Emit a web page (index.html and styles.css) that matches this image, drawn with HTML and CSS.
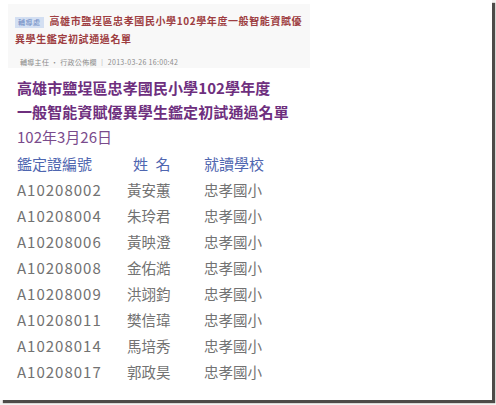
FILE: index.html
```html
<!DOCTYPE html>
<html lang="zh-Hant">
<head>
<meta charset="utf-8">
<link rel="stylesheet" href="styles.css">
</head>
<body>
<div class="page">
  <div class="summary">
    <div class="summary-title"><span class="badge">輔導處</span><span class="headline">高雄市鹽埕區忠孝國民小學102學年度一般智能資賦優異學生鑑定初試通過名單</span></div>
    <div class="meta">輔導主任 ‧ 行政公佈欄 ｜ 2013-03-26 16:00:42</div>
  </div>
  <div class="content">
    <h1 class="title">高雄市鹽埕區忠孝國民小學102學年度<br>一般智能資賦優異學生鑑定初試通過名單</h1>
    <div class="date">102年3月26日</div>
    <div class="table">
      <div class="th">鑑定證編號</div><div class="th th-name">姓&ensp;名</div><div class="th">就讀學校</div>
      <div class="code">A10208002</div><div class="cjk">黃安蕙</div><div class="cjk">忠孝國小</div>
      <div class="code">A10208004</div><div class="cjk">朱玲君</div><div class="cjk">忠孝國小</div>
      <div class="code">A10208006</div><div class="cjk">黃映澄</div><div class="cjk">忠孝國小</div>
      <div class="code">A10208008</div><div class="cjk">金佑澔</div><div class="cjk">忠孝國小</div>
      <div class="code">A10208009</div><div class="cjk">洪翊鈞</div><div class="cjk">忠孝國小</div>
      <div class="code">A10208011</div><div class="cjk">樊信瑋</div><div class="cjk">忠孝國小</div>
      <div class="code">A10208014</div><div class="cjk">馬培秀</div><div class="cjk">忠孝國小</div>
      <div class="code">A10208017</div><div class="cjk">郭政昊</div><div class="cjk">忠孝國小</div>
    </div>
  </div>
</div>
</body>
</html>
```
FILE: styles.css
```css
html, body {
  margin: 0;
  padding: 0;
  background: #f4f3f1;
}
body {
  width: 496px;
  height: 405px;
  overflow: hidden;
  font-family: "Noto Sans CJK TC", "Noto Sans", sans-serif;
}
.page {
  width: 492px;
  height: 400px;
  background: #ffffff;
  box-shadow: 3px 3px 1px #4d4b48;
  overflow: hidden;
}
.summary {
  margin: 4px 0 0 8px;
  width: 302px;
  height: 64px;
  box-sizing: border-box;
  padding: 8px 6px 0 7px;
  background: #f8f8f8;
}
.summary-title {
  font-size: 10px;
  line-height: 18px;
  font-weight: bold;
  letter-spacing: 0.6px;
  color: #9e3e42;
}
.badge {
  display: inline-block;
  background: #d3dff2;
  color: #6f8cc4;
  font-size: 7px;
  font-weight: normal;
  line-height: 11px;
  height: 11px;
  padding: 0 3px;
  margin-right: 6px;
  letter-spacing: 0.5px;
  vertical-align: middle;
}
.meta {
  margin-top: 8px;
  padding-left: 5px;
  font-size: 7px;
  line-height: 12px;
  color: #8c8c8c;
  letter-spacing: 0.3px;
}
.content {
  padding: 8px 0 0 17px;
}
.title {
  margin: 0;
  font-size: 15px;
  line-height: 24px;
  font-weight: bold;
  color: #6e2f7e;
  letter-spacing: 0.1px;
}
.date {
  font-size: 15px;
  line-height: 26px;
  color: #7a4b8c;
}
.table {
  display: grid;
  grid-template-columns: 110px 77px auto;
  grid-auto-rows: 26px;
  align-items: center;
}
.th {
  font-size: 15px;
  color: #4f66b0;
}
.th-name {
  padding-left: 6px;
}
.code {
  font-size: 15px;
  letter-spacing: 1px;
  color: #727272;
}
.cjk {
  font-size: 14.5px;
  color: #727272;
}
```
